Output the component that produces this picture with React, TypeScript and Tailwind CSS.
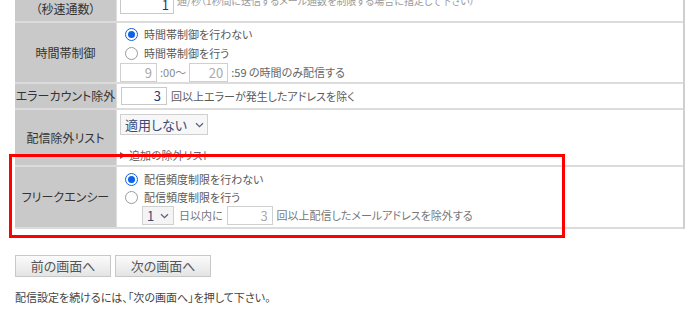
import React from "react";

const Radio = ({ checked }: { checked?: boolean }) =>
  checked ? (
    <span className="w-[13px] h-[13px] rounded-full border-[1.5px] border-[#0b63e5] flex items-center justify-center bg-white shrink-0">
      <span className="w-[7px] h-[7px] rounded-full bg-[#0b63e5]" />
    </span>
  ) : (
    <span className="w-[13px] h-[13px] rounded-full border border-[#9a9a9a] bg-white shrink-0" />
  );

const Chevron = () => (
  <svg width="9" height="6" viewBox="0 0 9 6" className="shrink-0">
    <path d="M1 1.2 L4.5 4.6 L8 1.2" fill="none" stroke="#5a6478" strokeWidth="1.3" />
  </svg>
);

export default function App() {
  return (
    <div className="relative w-[694px] h-[324px] overflow-hidden bg-white font-['Noto_Sans_CJK_JP','Noto_Sans',sans-serif] [font-feature-settings:'palt'] text-[11px] text-[#5a5a5a]">
      <div className="-mt-[21px] ml-[15px] w-[670px] border-r-2 border-[#cfcfcf]">
        {/* row 0 (partially visible) */}
        <div className="flex h-[44px] border-b-2 border-[#dcdcdc] box-border">
          <div className="w-[102px] bg-[#c9c9c9] border-r border-[#dcdcdc] flex flex-col items-center justify-center text-[12px] text-[#333] leading-[17px]">
            <span>配信速度</span>
            <span>（秒速通数）</span>
          </div>
          <div className="flex-1 pl-[3px] flex items-end pb-[7px] gap-[3px]">
            <span className="w-[54px] h-[19px] border border-[#c8c8c8] flex items-center justify-end pr-[4px] text-[13px] text-[#1c3c78]">1</span>
            <span className="text-[10px] text-[#999] mb-[6px]">通/秒（1秒間に送信するメール通数を制限する場合に指定して下さい）</span>
          </div>
        </div>

        {/* row 1 */}
        <div className="flex h-[61px] border-b-2 border-[#dcdcdc] box-border">
          <div className="w-[102px] bg-[#c9c9c9] border-r border-[#dcdcdc] flex items-center justify-center text-[12px] text-[#333]">
            時間帯制御
          </div>
          <div className="flex-1 pl-[3px] pt-[1px] flex flex-col">
            <div className="h-[20px] flex items-center pl-[5px] gap-[6px]">
              <Radio checked />
              <span>時間帯制御を行わない</span>
            </div>
            <div className="h-[19px] flex items-center pl-[5px] gap-[6px]">
              <Radio />
              <span>時間帯制御を行う</span>
            </div>
            <div className="h-[19px] flex items-center">
              <span className="w-[37px] h-[19px] border border-[#d0d0d0] flex items-center justify-end pr-[4px] text-[#aaa] text-[13px]">9</span>
              <span className="ml-[3px] text-[#888]">:00～</span>
              <span className="ml-[3px] w-[39px] h-[19px] border border-[#d0d0d0] flex items-center justify-end pr-[4px] text-[#aaa] text-[13px]">20</span>
              <span className="ml-[3px] text-[#666]">:59 の時間のみ配信する</span>
            </div>
          </div>
        </div>

        {/* row 2 */}
        <div className="flex h-[26px] border-b-2 border-[#dcdcdc] box-border">
          <div className="w-[102px] bg-[#c9c9c9] border-r border-[#dcdcdc] flex items-center justify-center text-[12px] text-[#333]">
            エラーカウント除外
          </div>
          <div className="flex-1 pl-[4px] pt-[3px] flex items-start gap-[4px]">
            <span className="w-[46px] h-[18px] border border-[#c8c8c8] flex items-center justify-end pr-[5px] text-[#1c3c78] text-[13px]">3</span>
            <span className="leading-[18px]">回以上エラーが発生したアドレスを除く</span>
          </div>
        </div>

        {/* row 3 */}
        <div className="flex h-[57px] border-b-2 border-[#dcdcdc] box-border">
          <div className="w-[102px] bg-[#c9c9c9] border-r border-[#dcdcdc] flex items-center justify-center text-[12px] text-[#333]">
            配信除外リスト
          </div>
          <div className="flex-1 pl-[3px] pt-[4px] flex flex-col items-start">
            <div className="w-[88px] h-[21px] border border-[#d0d0d0] bg-[#f7f7f7] flex items-center pl-[4px] gap-[8px] text-[13px] text-[#3a4a78]">
              <span>適用しない</span>
              <Chevron />
            </div>
            <div className="mt-[12px] h-[16px] flex items-center gap-[3px] text-[#666]">
              <svg width="6" height="7" viewBox="0 0 6 7"><path d="M0 0 L6 3.5 L0 7 Z" fill="#666" /></svg>
              <span>追加の除外リスト</span>
            </div>
          </div>
        </div>

        {/* row 4 */}
        <div className="flex h-[62px] border-b-2 border-[#dcdcdc] box-border">
          <div className="w-[102px] bg-[#c9c9c9] border-r border-[#dcdcdc] flex items-center justify-center text-[12px] text-[#333]">
            フリークエンシー
          </div>
          <div className="flex-1 pl-[3px] pt-[2px] flex flex-col">
            <div className="h-[20px] flex items-center pl-[5px] gap-[6px]">
              <Radio checked />
              <span>配信頻度制限を行わない</span>
            </div>
            <div className="h-[17px] flex items-center pl-[5px] gap-[6px]">
              <Radio />
              <span>配信頻度制限を行う</span>
            </div>
            <div className="h-[19px] flex items-center pl-[22px]">
              <div className="w-[32px] h-[19px] border border-[#d0d0d0] bg-[#f4f4f4] flex items-center pl-[4px] gap-[6px] text-[13px] text-[#3a4a78]">
                <span>1</span>
                <Chevron />
              </div>
              <span className="ml-[5px] text-[#777]">日以内に</span>
              <span className="ml-[4px] w-[46px] h-[19px] border border-[#d0d0d0] flex items-center justify-end pr-[4px] text-[#aaa] text-[13px]">3</span>
              <span className="ml-[4px] text-[#777]">回以上配信したメールアドレスを除外する</span>
            </div>
          </div>
        </div>
      </div>

      <div className="ml-[15px] mt-[26px] flex gap-[4px]">
        <button className="w-[96px] h-[22px] border border-[#c8c8c8] bg-gradient-to-b from-[#fbfbfb] to-[#e4e4e4] text-[13px] text-[#555] flex items-center justify-center">
          前の画面へ
        </button>
        <button className="w-[96px] h-[22px] border border-[#c8c8c8] bg-gradient-to-b from-[#fbfbfb] to-[#e4e4e4] text-[13px] text-[#555] flex items-center justify-center">
          次の画面へ
        </button>
      </div>

      <p className="ml-[15px] mt-[12px] leading-[16px] text-[#444]">
        配信設定を続けるには、「次の画面へ」を押して下さい。
      </p>

      <div className="absolute left-[9px] top-[154px] w-[556px] h-[84px] border-[3px] border-[#ff0000]" />
    </div>
  );
}
